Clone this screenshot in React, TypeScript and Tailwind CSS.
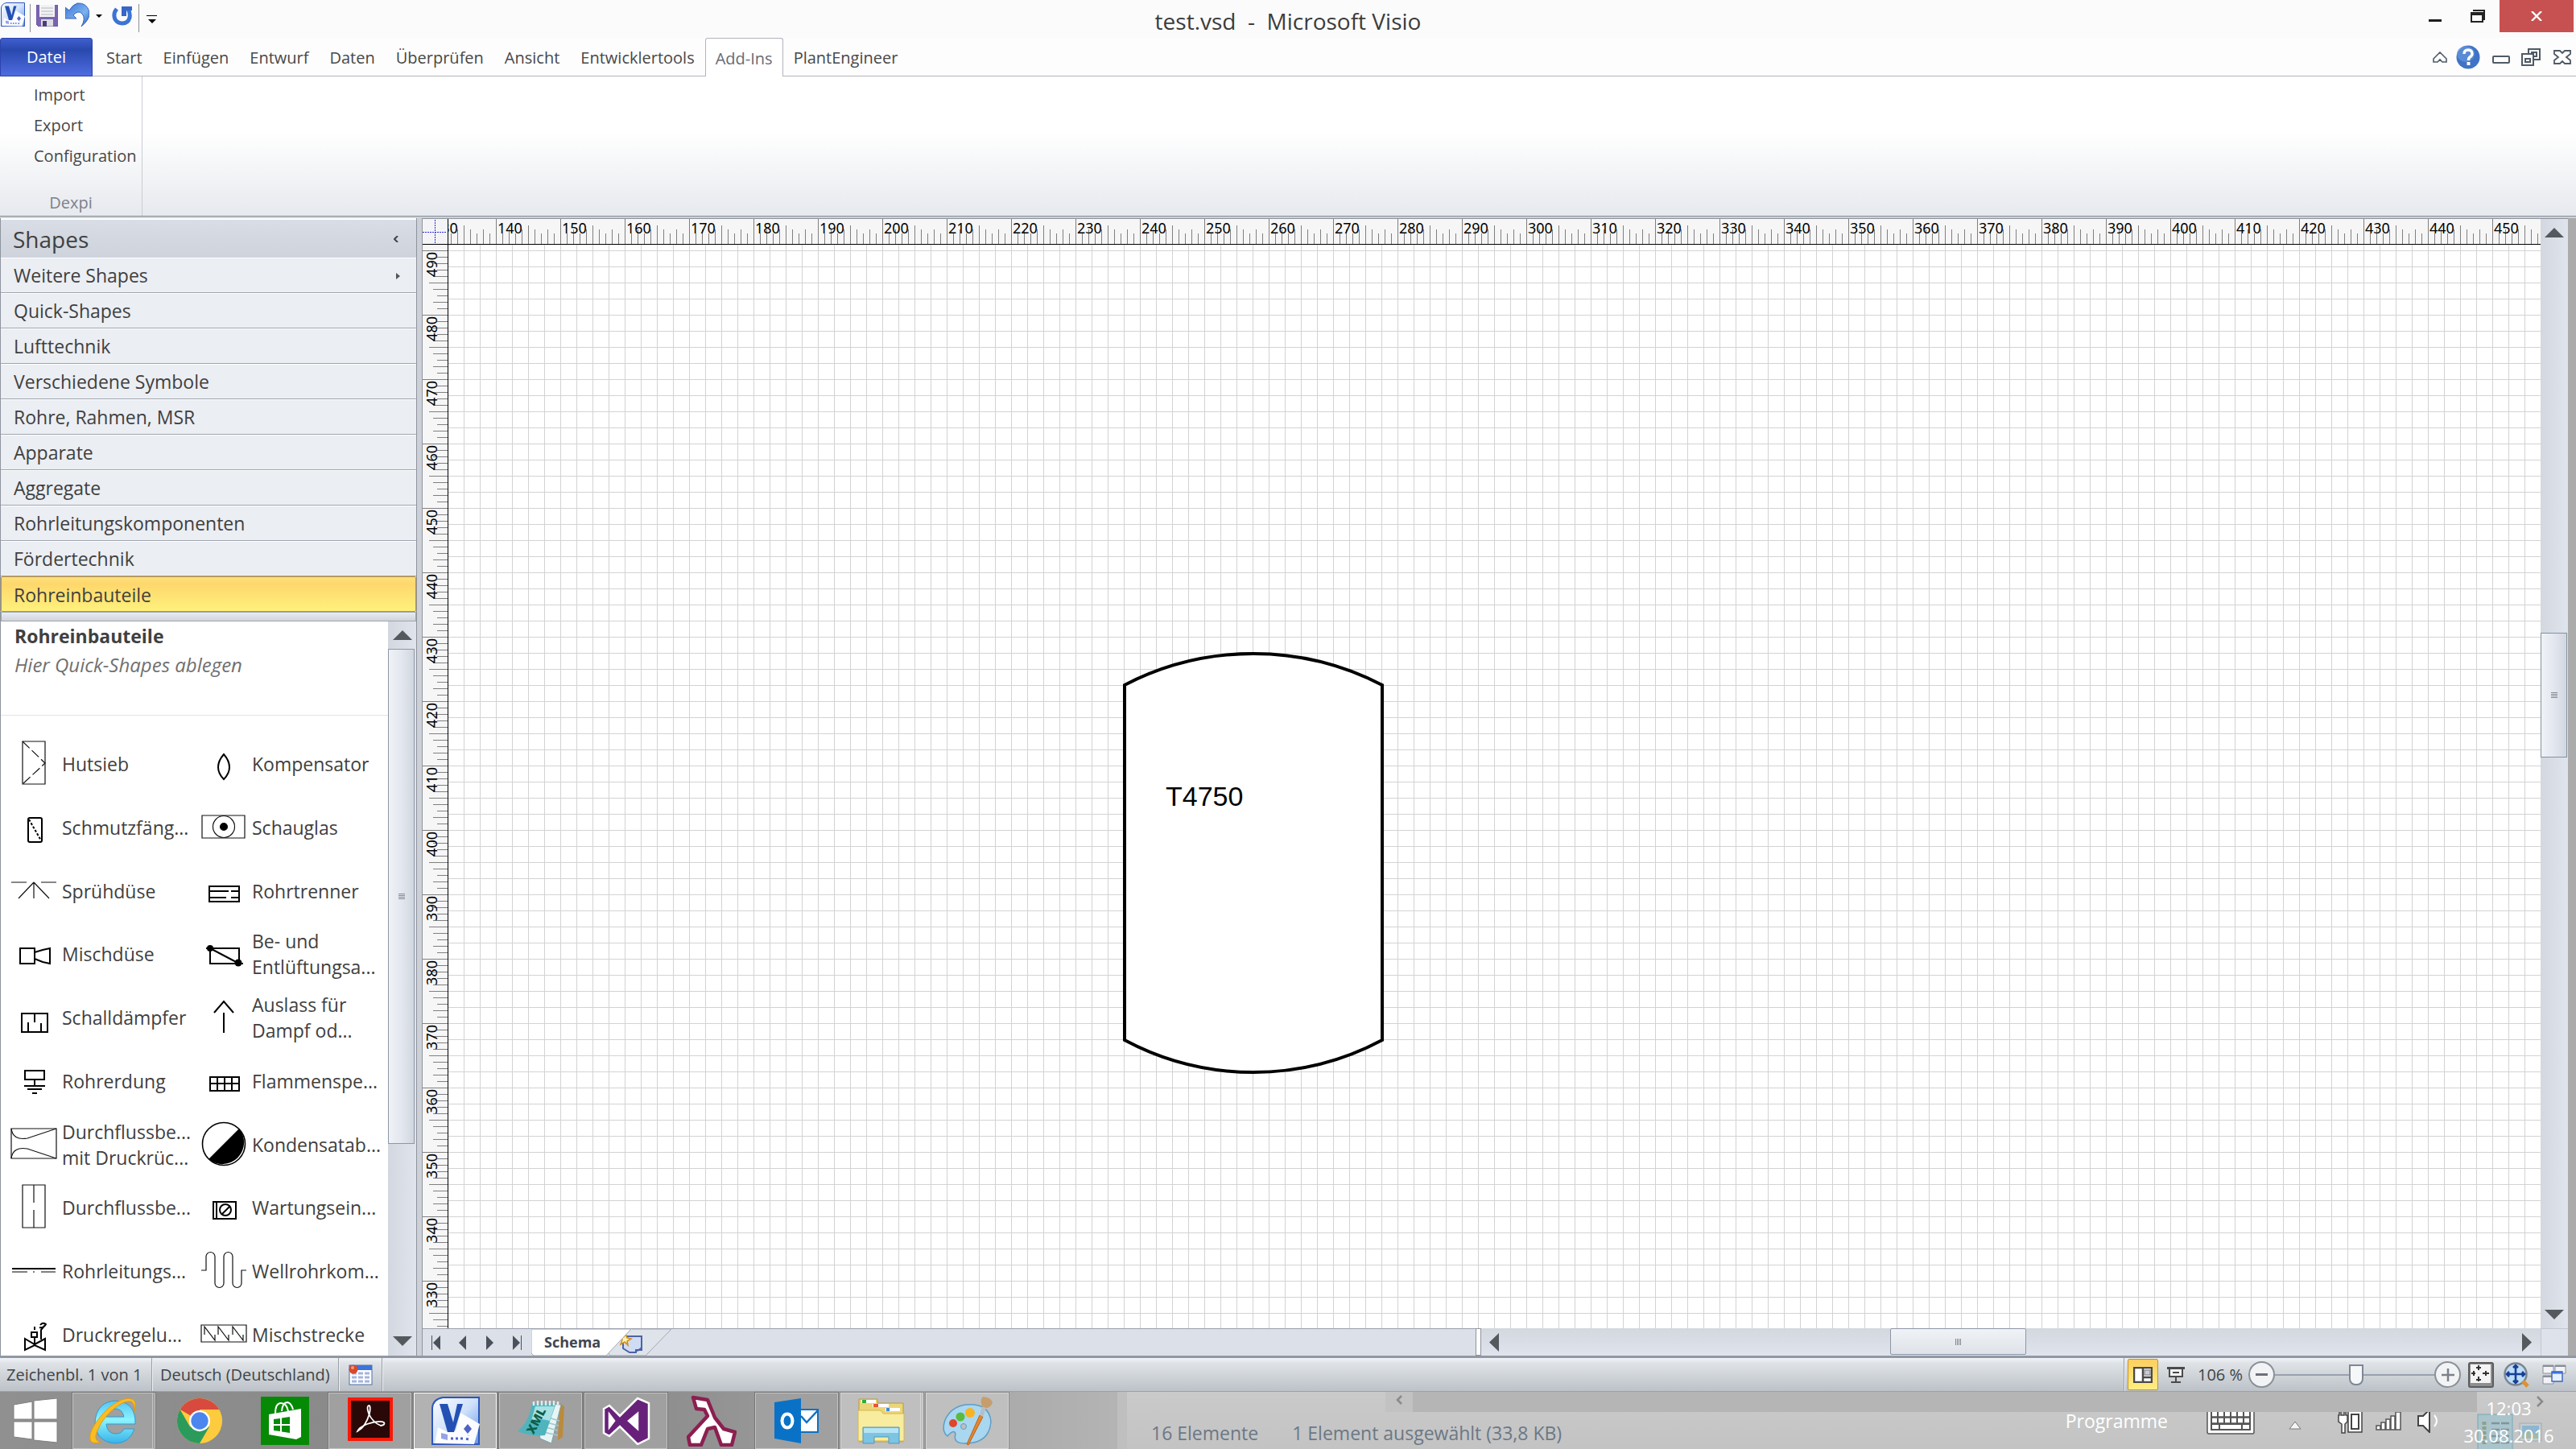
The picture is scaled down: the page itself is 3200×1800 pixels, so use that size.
import React from "react";

type Kids = { children?: React.ReactNode };

/* ---------- shared drawings ---------- */

function VisioLogo({ className }: { className: string }) {
  return (
    <svg viewBox="0 0 60 60" className={className} aria-hidden="true">
      <defs>
        <linearGradient id="visioBack" x1="0" y1="0" x2="1" y2="1">
          <stop offset="0" stopColor="#fdfeff" />
          <stop offset="0.5" stopColor="#cfe0fa" />
          <stop offset="1" stopColor="#5f93e6" />
        </linearGradient>
      </defs>
      <path d="M14 1H59V59H1V14Q2 3 14 1Z" fill="url(#visioBack)" stroke="#2c56bd" strokeWidth="2" />
      <path d="M36 20L60 34L53 59L4 58L8 38L20 44L30 42Z" fill="#ffffff" opacity="0.95" />
      <path d="M10 9H20L27 32L32 9H39L28 44H20Z" fill="#2450b4" />
      <path d="M45 34L50 40L45 46L40 40Z" fill="#4f62c4" />
      <path d="M12 45L20 47V54L12 52Z" fill="#98a2e6" />
      <path d="M24 52H40M44 54L46 48" stroke="#5160c8" strokeWidth="3" strokeDasharray="3 3" />
    </svg>
  );
}

function Triangle({ dir, className, fill = "#55595e" }: { dir: "up" | "down" | "left" | "right"; className: string; fill?: string }) {
  const d = {
    up: "M0 10L10 0L20 10Z",
    down: "M0 0H20L10 10Z",
    left: "M20 0V10L0 5Z",
    right: "M0 0V10L20 5Z",
  }[dir];
  return (
    <svg viewBox="0 0 20 10" preserveAspectRatio="none" className={className} aria-hidden="true">
      <path d={d} fill={fill} />
    </svg>
  );
}

/* ---------- title bar ---------- */

function TitleBar() {
  return (
    <header className="grid h-[47px] shrink-0 grid-cols-[1fr_auto_1fr] bg-[#fbfbfb]">
      <div className="flex items-start">
        <button aria-label="Visio" className="mt-[3px] ml-px"><VisioLogo className="size-[30px]" /></button>
        <span className="mt-[5px] ml-[6px] h-[35px] w-px bg-[#8b8f95]" />
        <button aria-label="Speichern" className="mt-[6px] ml-[7px]">
          <svg viewBox="0 0 27 27" className="size-[27px]">
            <path d="M0 0H27V27H3L0 24Z" fill="#7a63b0" />
            <rect x="4" y="0" width="19" height="15" fill="#f2f2f4" />
            <path d="M6 4H21M6 8H21M6 12H21" stroke="#c9cbd0" strokeWidth="1.5" />
            <rect x="6" y="18" width="15" height="9" fill="#dcdce2" />
            <rect x="8" y="20" width="5" height="7" fill="#4a3c78" />
            <path d="M0 0V24L3 27H27V0" fill="none" stroke="#6a549f" />
          </svg>
        </button>
        <button aria-label="Rückgängig" className="mt-[3px] ml-[9px]">
          <svg viewBox="0 0 30 30" className="size-[30px]">
            <defs>
              <linearGradient id="undo" x1="0" y1="0" x2="1" y2="1">
                <stop offset="0" stopColor="#3d74cf" />
                <stop offset="0.6" stopColor="#7db2f2" />
                <stop offset="1" stopColor="#2a5bb8" />
              </linearGradient>
            </defs>
            <path d="M0 6V20H14L10 16Q16 9 21 14Q26 20 20 30Q31 21 30 12Q27 0 15 1Q9 3 5 10Z" fill="url(#undo)" stroke="#3465bd" />
          </svg>
        </button>
        <button aria-label="Rückgängig-Liste" className="mt-[18px] ml-[8px]"><Triangle dir="down" className="h-[4px] w-[8px]" fill="#000" /></button>
        <button aria-label="Wiederholen" className="mt-[8px] ml-[12px]">
          <svg viewBox="0 0 26 24" className="h-[24px] w-[26px]">
            <path d="M6 3Q1 9 4 16Q7 21 13 21Q20 21 22 14Q23 8 20 3" fill="none" stroke="#3c74d4" strokeWidth="5" />
            <path d="M12 0H25V5H18V12H12Z" fill="#3667c8" />
          </svg>
        </button>
        <span className="mt-[5px] ml-[7px] h-[35px] w-px bg-[#8b8f95]" />
        <button aria-label="Symbolleiste anpassen" className="mt-[19px] ml-[9px] flex flex-col items-center gap-[4px]">
          <span className="h-px w-[13px] bg-black" />
          <Triangle dir="down" className="h-[5px] w-[10px]" fill="#000" />
        </button>
      </div>
      <h1 className="self-center pt-1 text-[28px] leading-[32px] whitespace-pre text-[#3c3c3c]">test.vsd  -  Microsoft Visio</h1>
      <div className="flex items-start justify-end pr-[3px]">
        <button aria-label="Minimieren" className="mt-[24px] mr-[36px] h-[3px] w-[16px] bg-[#1c1c1c]" />
        <button aria-label="Verkleinern" className="mt-[12px] mr-[18px]">
          <svg viewBox="0 0 18 16" className="h-[16px] w-[18px]">
            <path d="M3 1H17V13" fill="none" stroke="#222" strokeWidth="2" />
            <path d="M1 4H15V15H1ZM1 6H15" fill="none" stroke="#222" strokeWidth="2" />
          </svg>
        </button>
        <button aria-label="Schließen" className="flex h-[40px] w-[92px] items-center justify-center bg-[#c75050]">
          <svg viewBox="0 0 14 12" className="h-[12px] w-[14px]"><path d="M1 0L13 12M13 0L1 12" stroke="#fff" strokeWidth="2.4" /></svg>
        </button>
      </div>
    </header>
  );
}

/* ---------- ribbon ---------- */

function Tab({ children }: Kids) {
  return <button role="tab" className="h-full px-[13px] pt-[2px] text-[#484848]">{children}</button>;
}

function RibbonTabs() {
  return (
    <nav role="tablist" className="flex h-[48px] shrink-0 items-center bg-[#fdfdfd] text-[20px] leading-[28px] shadow-[inset_0_-1px_0_#b3b3bd]">
      <button role="tab" className="mr-[4px] h-full w-[115px] rounded-t-[3px] border border-[#2c44ae] bg-linear-to-b from-[#3f5fcf] via-[#2a49ae] via-30% to-[#4e6ce0] text-white">Datei</button>
      <Tab>Start</Tab>
      <Tab>Einfügen</Tab>
      <Tab>Entwurf</Tab>
      <Tab>Daten</Tab>
      <Tab>Überprüfen</Tab>
      <Tab>Ansicht</Tab>
      <Tab>Entwicklertools</Tab>
      <button role="tab" aria-selected="true" className="h-full rounded-t-[3px] border border-b-0 border-[#b3b3bd] bg-white px-[12px] pt-[2px] text-[#666b78]">Add-Ins</button>
      <Tab>PlantEngineer</Tab>
      <div className="ml-auto flex items-center pr-[6px]">
        <button aria-label="Menüband minimieren">
          <svg viewBox="0 0 18 14" className="h-[14px] w-[18px]"><path d="M9 1L17 9V13H12L9 10L6 13H1V9Z" fill="#fff" stroke="#4f5a66" strokeWidth="1.6" /></svg>
        </button>
        <button aria-label="Hilfe" className="ml-[11px]">
          <svg viewBox="0 0 30 30" className="size-[30px]">
            <circle cx="15" cy="15" r="14.5" fill="#3f73c6" />
            <ellipse cx="12" cy="11" rx="11" ry="10" fill="#6c9be0" opacity="0.6" />
            <path d="M10 11Q10 6 15 6Q20 6 20 11Q20 13 17 15Q15.500 16 15.500 19" fill="none" stroke="#fff" strokeWidth="3.400" />
            <rect x="13.500" y="21" width="4" height="4" fill="#fff" />
          </svg>
        </button>
        <button aria-label="Fenster minimieren" className="mt-[5px] ml-[15px] h-[10px] w-[22px] rounded-[2px] border-2 border-[#4f5a66] bg-white" />
        <button aria-label="Fenster wiederherstellen" className="ml-[14px]">
          <svg viewBox="0 0 24 22" className="h-[22px] w-[24px]" fill="#fff" stroke="#4f5a66" strokeWidth="2">
            <path d="M9 1H23V14H9Z" />
            <path d="M13 5H19V10H13Z" />
            <path d="M1 7H15V21H1Z" />
            <path d="M5 13H11V17H5Z" />
          </svg>
        </button>
        <button aria-label="Fenster schließen" className="ml-[16px]">
          <svg viewBox="0 0 22 18" className="h-[18px] w-[22px]"><path d="M1 1H8L11 4L14 1H21V5L16 9L21 13V17H14L11 14L8 17H1V13L6 9L1 5Z" fill="#fff" stroke="#4f5a66" strokeWidth="1.800" /></svg>
        </button>
      </div>
    </nav>
  );
}

function Ribbon() {
  return (
    <section className="flex h-[173px] shrink-0 bg-linear-to-b from-white from-40% to-[#e6e9ee] text-[20px] leading-[38px] text-[#484848]">
      <div className="flex w-[177px] flex-col border-r border-[#c9ccd2] pt-[4px]">
        <div className="flex flex-col items-start pl-[42px]">
          <button>Import</button>
          <button>Export</button>
          <button>Configuration</button>
        </div>
        <p className="mt-auto pb-[4px] text-center leading-[24px] text-[#7c828c]">Dexpi</p>
      </div>
    </section>
  );
}

/* ---------- shapes panel ---------- */

const stencils = [
  "Weitere Shapes",
  "Quick-Shapes",
  "Lufttechnik",
  "Verschiedene Symbole",
  "Rohre, Rahmen, MSR",
  "Apparate",
  "Aggregate",
  "Rohrleitungskomponenten",
  "Fördertechnik",
];

const thin = { fill: "none", stroke: "#111", strokeWidth: 1.2 };
const bold = { fill: "none", stroke: "#000", strokeWidth: 2 };

const shapes: { label: string[]; icon: React.ReactNode }[] = [
  { label: ["Hutsieb"], icon: <g {...thin}><path d="M15 2H43V55H15Z" /><path d="M15 2L43 29L15 55" strokeDasharray="12 4" /></g> },
  { label: ["Kompensator"], icon: <path {...bold} d="M29 18Q36 26 36 34Q36 42 29 49Q22 42 22 34Q22 26 29 18Z" /> },
  { label: ["Schmutzfäng..."], icon: <g {...bold}><rect x="22" y="18" width="17" height="30" rx="2" /><path d="M23 20L38 46" strokeDasharray="3 2" /></g> },
  { label: ["Schauglas"], icon: <g {...thin}><path d="M2 15H55V43H2Z" /><circle cx="29" cy="29" r="13.500" /><circle cx="29" cy="29" r="4.500" fill="#000" /></g> },
  { label: ["Sprühdüse"], icon: <g {...thin}><path d="M1 19H20M38 19H57M29 19V39M29 19L10 39M29 19L48 39" /></g> },
  { label: ["Rohrtrenner"], icon: <g {...bold}><path d="M11 24H48V43H11ZM11 30H35M38 30H48M11 38H32M38 38H48" /></g> },
  { label: ["Mischdüse"], icon: <g {...bold}><path d="M12 23H30V42H12Z" /><path d="M30 28L40 25L49 23V42L40 40L30 36" /></g> },
  { label: ["Be- und", "Entlüftungsa..."], icon: <g {...bold}><path d="M12 23H48V42H12Z" /><path d="M12 23L48 42" /><circle cx="12" cy="23" r="4" fill="#000" stroke="none" /><circle cx="47" cy="41" r="4.500" fill="#000" stroke="none" /><path d="M7 23H17M42 42H53" /></g> },
  { label: ["Schalldämpfer"], icon: <g {...bold}><path d="M14 25H46V48H14ZM30 25V36M22 36V48M38 37V48" /></g> },
  { label: ["Auslass für", "Dampf od..."], icon: <g {...bold}><path d="M29 24V49M17 24L29 10L41 24" /></g> },
  { label: ["Rohrerdung"], icon: <g {...bold}><path d="M18 17H42V28H18ZM30 28V36M17 36H43M21 40H39M27 45H33" /></g> },
  { label: ["Flammenspe..."], icon: <g {...bold}><path d="M12 25H48V42H12ZM12 33H48M21 25V42M30 25V42M39 25V42" /></g> },
  { label: ["Durchflussbe...", "mit Druckrüc..."], icon: <g {...thin}><path d="M1 10H57V47H1Z" /><path d="M1 10Q3 25 21 22L57 10M1 47Q3 32 21 35L57 47" /></g> },
  { label: ["Kondensatab..."], icon: <g><circle cx="29" cy="29" r="26.500" fill="#fff" stroke="#000" strokeWidth="1.600" /><path d="M48 10A27 27 0 0 1 10 48Z" fill="#000" /></g> },
  { label: ["Durchflussbe..."], icon: <g {...thin}><path d="M15 2H43V55H15ZM29 2V24M29 33V55" /></g> },
  { label: ["Wartungsein..."], icon: <g {...bold}><path d="M16 23H44V44H16ZM20 23V44" /><circle cx="31" cy="33" r="7" /><path d="M27 38L37 28" /></g> },
  { label: ["Rohrleitungs..."], icon: <g {...bold}><path d="M2 27H56" /><path d="M2 31H21M28 31H30M38 31H56" strokeWidth="1" /></g> },
  { label: ["Wellrohrkom..."], icon: <g {...thin}><path d="M1 29H7V12A5.500 5.500 0 0 1 18 12V45A5.500 5.500 0 0 0 29 45V12A5.500 5.500 0 0 1 40 12V45A5.500 5.500 0 0 0 51 45V29H57" /></g> },
  { label: ["Druckregelu..."], icon: <g {...bold}><path d="M18 35L30 42L43 35V49L30 43L18 49Z" /><path d="M30 42V32M26 27H33V33H26ZM38 36V24L43 18M37 18Q40 14 44 17Q41 22 36 21M30 24V20" /></g> },
  { label: ["Mischstrecke"], icon: <g {...thin}><path d="M1 18H57V39H1Z" /><path d="M5 30V20L18 37V30M22 30V20L35 37V30M40 30V20L53 37V30" /></g> },
];

function ShapesPanel() {
  return (
    <aside className="flex w-[518px] shrink-0 flex-col overflow-hidden border-x border-[#8e949e] bg-white text-[23px] text-[#404040]">
      <div className="mt-[2px] flex h-[47px] shrink-0 items-center justify-between bg-linear-to-b from-[#d9dde5] to-[#ced3dc] pr-[22px] pl-[15px] text-[28px]">
        <h2>Shapes</h2>
        <button aria-label="Minimieren">
          <svg viewBox="0 0 6 8" className="h-[8px] w-[6px]"><path d="M5 0L1 4L5 8" fill="none" stroke="#444" strokeWidth="2" /></svg>
        </button>
      </div>
      <ul className="shrink-0 bg-[#ebeef3]">
        {stencils.map((name, i) => (
          <li key={name}>
            <button className="flex h-[44px] w-full items-center justify-between border-b border-[#a0a5ad] pt-[2px] pr-[20px] pl-[16px] shadow-[inset_0_1px_0_#ffffff]">
              {name}
              {i === 0 && <Triangle dir="right" className="h-[8px] w-[5px]" fill="#555" />}
            </button>
          </li>
        ))}
        <li>
          <button className="flex h-[44px] w-full items-center rounded-[2px] border border-[#c2932f] bg-linear-to-b from-[#ffe07c] from-0% via-[#fed76c] via-20% to-[#fff17c] pt-[2px] pl-[15px]">Rohreinbauteile</button>
        </li>
      </ul>
      <div className="h-[12px] shrink-0 border border-[#a0a5ad] bg-linear-to-b from-[#e9ecf1] to-[#cfd4dc]" />
      <div className="flex min-h-0 flex-1">
        <div className="flex min-w-0 flex-1 flex-col overflow-hidden">
          <div className="h-[117px] shrink-0 border-b border-[#e2e3e8] pl-[17px] leading-[36px]">
            <h3 className="font-bold">Rohreinbauteile</h3>
            <p className="text-[24px] text-[#707070] italic">Hier Quick-Shapes ablegen</p>
          </div>
          <div className="mt-[21px] grid h-[787px] shrink-0 grid-cols-[236px_236px] grid-rows-10 pl-[3px]">
            {shapes.map((s, i) => (
              <button key={i} className="flex items-center gap-[6px] pl-[9px] text-left leading-[32px] whitespace-nowrap">
                <svg viewBox="0 0 58 60" className="h-[60px] w-[58px] shrink-0" aria-hidden="true">{s.icon}</svg>
                <span>{s.label.map((l) => <span key={l} className="block">{l}</span>)}</span>
              </button>
            ))}
          </div>
        </div>
        <div className="flex w-[35px] shrink-0 flex-col bg-linear-to-r from-[#d3d8e0] to-[#dfe4ed]">
          <button aria-label="Nach oben" className="flex h-[34px] items-center justify-center"><Triangle dir="up" className="h-[12px] w-[24px]" /></button>
          <div className="flex h-[615px] w-[33px] items-center justify-center border border-[#8e97a5] bg-linear-to-r from-[#eff2f6] via-[#e3e7ef] to-[#d2d6de]"><Grip /></div>
          <button aria-label="Nach unten" className="mt-auto flex h-[36px] items-center justify-center"><Triangle dir="down" className="h-[12px] w-[24px]" /></button>
        </div>
      </div>
    </aside>
  );
}

function Grip({ turned = false }: { turned?: boolean }) {
  return (
    <span className={turned ? "flex gap-px" : "flex flex-col gap-px"}>
      {[0, 1, 2, 3].map((n) => (
        <i key={n} className={turned ? "h-[8px] w-px bg-[#85898f]" : "h-px w-[8px] bg-[#85898f]"} />
      ))}
    </span>
  );
}

/* ---------- rulers and page ---------- */

const tickLengths = [32, 14, 19, 14, 19, 24, 19, 14, 19, 14];
const columns = Array.from({ length: 33 }, (_, i) => 130 + i * 10);
const rows = Array.from({ length: 17 }, (_, i) => 490 - i * 10);

function TopRuler() {
  const ticks = tickLengths.map((l, i) => `M${i * 8 + 0.5} ${32 - l}V32`).join("");
  return (
    <div className="flex h-[32px] overflow-hidden border-b border-black bg-[#f6f6f6]">
      <div className="-ml-[21px] flex">
        {columns.map((n) => (
          <div key={n} className="relative h-[31px] w-[80px] shrink-0 pl-[2px] text-[18px] leading-[22px]">
            <svg viewBox="0 0 80 32" className="absolute top-0 left-0 h-[32px] w-[80px]"><path d={ticks} stroke="#808080" /></svg>
            <span className="relative">{n}</span>
          </div>
        ))}
      </div>
    </div>
  );
}

function SideRuler() {
  const ticks = tickLengths.map((l, i) => `M${32 - l} ${i * 8 + 0.5}H32`).join("");
  return (
    <div className="flex h-full flex-col overflow-hidden border-r border-black bg-[#f6f6f6] pt-[7px]">
      {rows.map((n) => (
        <div key={n} className="relative h-[80px] w-[32px] shrink-0 pt-[2px] text-[18px] leading-[22px]">
          <svg viewBox="0 0 32 80" className="absolute top-0 left-0 h-[80px] w-[32px]"><path d={ticks} stroke="#808080" /></svg>
          <span className="relative block w-[22px] rotate-180 [writing-mode:vertical-rl]">{n}</span>
        </div>
      ))}
    </div>
  );
}

function Page() {
  return (
    <div className="relative overflow-hidden bg-white bg-[linear-gradient(to_right,#d3d3d3_1px,transparent_1px),linear-gradient(to_bottom,#d3d3d3_1px,transparent_1px)] bg-[length:20px_20px] bg-[position:19px_7px]">
      <svg viewBox="0 0 324 524" className="absolute top-[506px] left-[838px] h-[524px] w-[324px]">
        <path d="M2 41Q77 2 162 2Q247 2 322 41V482Q247 522 162 522Q77 522 2 482Z" fill="#fff" stroke="#000" strokeWidth="4" />
      </svg>
      <span className="absolute top-[665px] left-[891px] font-['Liberation_Sans',sans-serif] text-[34px] leading-[40px] text-black">T4750</span>
    </div>
  );
}

function PageTabs() {
  return (
    <div className="flex h-[34px] shrink-0 bg-[#dce0e8]">
      <div className="flex w-[1308px] items-center border-t border-[#9aa0ae] pl-[11px]">
        <button aria-label="Erste Seite" className="flex h-[18px] w-[11px] justify-between"><i className="w-px bg-[#4b515c]" /><Triangle dir="left" className="h-[18px] w-[9px]" fill="#4b515c" /></button>
        <button aria-label="Vorherige Seite" className="ml-[23px]"><Triangle dir="left" className="h-[18px] w-[9px]" fill="#4b515c" /></button>
        <button aria-label="Nächste Seite" className="ml-[25px]"><Triangle dir="right" className="h-[18px] w-[9px]" fill="#4b515c" /></button>
        <button aria-label="Letzte Seite" className="ml-[24px] flex h-[18px] w-[11px] justify-between"><Triangle dir="right" className="h-[18px] w-[9px]" fill="#4b515c" /><i className="w-px bg-[#4b515c]" /></button>
        <button className="relative ml-[12px] h-full w-[126px] pl-[16px] text-left">
          <svg viewBox="0 0 126 33" className="absolute top-0 left-0 h-full w-full"><path d="M0 0H124L93 33H3L0 30Z" fill="#fff" stroke="#a3a8b2" strokeWidth="1" /></svg>
          <span className="relative text-[18px] font-bold text-[#40464f]">Schema</span>
        </button>
        <button aria-label="Neue Seite" className="-ml-[32px] h-full">
          <svg viewBox="0 0 82 33" className="h-[33px] w-[82px]">
            <path d="M31 0H80L48 33H4L0 28" fill="#dfe3ea" stroke="#a3a8b2" />
            <path d="M20 9H43V26H36V29H28L20 24Z" fill="#cfdcf3" stroke="#4b64a6" strokeWidth="2" />
            <path d="M34 29L43 22V26Z" fill="#4b64a6" />
            <path d="M23 6L25 11L30 12L25 15L26 20L22 16L17 19L19 13L16 9L21 10Z" fill="#fff3b0" stroke="#d18a1c" strokeWidth="1.500" />
          </svg>
        </button>
      </div>
      <span className="w-[7px] border border-[#8e949e] bg-white" />
      <div className="flex min-w-0 flex-1 items-center bg-linear-to-b from-[#d3d8df] to-[#dfe4ed] pr-[11px] pl-[10px]">
        <button aria-label="Nach links"><Triangle dir="left" className="h-[23px] w-[12px]" /></button>
        <div className="ml-[486px] flex h-[33px] w-[169px] items-center justify-center self-start rounded-[2px] border border-[#8e97a5] bg-linear-to-b from-[#eff2f6] to-[#dfe2e8]"><Grip turned /></div>
        <button aria-label="Nach rechts" className="ml-auto"><Triangle dir="right" className="h-[23px] w-[12px]" /></button>
      </div>
      <span className="w-[34px] border-t border-l border-[#c3c8d0] bg-[#dee2ea]" />
    </div>
  );
}

function DrawingArea() {
  return (
    <main className="flex min-w-0 flex-1 flex-col border-l border-[#8e949e]">
      <div className="flex min-h-0 flex-1 border-t border-[#8e949e]">
        <div className="grid min-w-0 flex-1 grid-cols-[32px_minmax(0,1fr)] grid-rows-[32px_minmax(0,1fr)] font-['Noto_Sans',sans-serif] text-black">
          <div className="flex items-center border-r border-b border-black bg-[#f4f4f6]">
            <svg viewBox="0 0 31 30" className="h-[30px] w-[31px]"><path d="M0 15.500H30M15.500 0V30" stroke="#2a2ae0" strokeDasharray="2 1" /></svg>
          </div>
          <TopRuler />
          <SideRuler />
          <Page />
        </div>
        <div className="flex w-[34px] shrink-0 flex-col bg-linear-to-r from-[#d3d8e0] to-[#dfe4ed]">
          <button aria-label="Nach oben" className="flex h-[34px] items-center justify-center"><Triangle dir="up" className="h-[12px] w-[24px]" /></button>
          <div className="mt-[480px] flex h-[155px] w-[33px] items-center justify-center border border-[#8292a2] bg-linear-to-r from-[#eff2f6] via-[#e3e7ef] to-[#d2d6de]"><Grip /></div>
          <button aria-label="Nach unten" className="mt-auto flex h-[34px] items-center justify-center"><Triangle dir="down" className="h-[12px] w-[24px]" /></button>
        </div>
      </div>
      <PageTabs />
    </main>
  );
}

/* ---------- status bar ---------- */

const divider = "h-full w-[2px] border-r border-[#eef0f3] bg-[#9aa0a8]";

function StatusBar() {
  return (
    <footer className="flex h-[44px] shrink-0 items-center border-t-[3px] border-[#9198a5] bg-linear-to-b from-[#f2f4f6] via-[#dfe3e7] via-15% to-[#bcc2c8] text-[20px] leading-[28px] text-[#404448]">
      <span className="w-[188px] pl-[8px]">Zeichenbl. 1 von 1</span>
      <i className={divider} />
      <button className="w-[230px] pl-[9px] text-left">Deutsch (Deutschland)</button>
      <i className={divider} />
      <button aria-label="Makro aufzeichnen" className="flex w-[52px] justify-center">
        <svg viewBox="0 0 30 26" className="h-[26px] w-[30px]">
          <rect x="1" y="1" width="28" height="24" fill="#fff" stroke="#4a6fa8" />
          <rect x="1" y="1" width="28" height="6" fill="#3a74dc" />
          <path d="M4 11H26M4 16H26M4 21H26" stroke="#a4b4dc" strokeWidth="3" strokeDasharray="6 2" />
          <circle cx="6" cy="6" r="5.500" fill="#d9482c" />
          <circle cx="5" cy="4" r="2" fill="#f19a80" />
        </svg>
      </button>
      <i className={divider} />
      <div className="ml-auto flex h-full items-center pr-[12px]">
        <i className={divider} />
        <button aria-label="Normalansicht" className="ml-[3px] flex h-[39px] w-[38px] items-center justify-center rounded-[2px] border border-[#c2932f] bg-linear-to-b from-[#fdcf60] to-[#ffee80]">
          <svg viewBox="0 0 24 20" className="h-[20px] w-[24px]"><path d="M1 1H23V19H1ZM12 1V19M12 13H23" fill="#fff" stroke="#4a4a4a" strokeWidth="2.500" /><rect x="14" y="4" width="7" height="6" fill="#c9ccd6" stroke="#777" /></svg>
        </button>
        <button aria-label="Vollbildansicht" className="ml-[11px]">
          <svg viewBox="0 0 22 20" className="h-[20px] w-[22px]"><path d="M0 0H22V3H0Z" fill="#4a4a4a" /><path d="M3 3V12H19V3" fill="#f4f4f4" stroke="#4a4a4a" strokeWidth="2" /><path d="M7 7H15M11 12V18M5 19H17" stroke="#4a4a4a" strokeWidth="2" /></svg>
        </button>
        <span className="ml-[16px] w-[62px] whitespace-nowrap">106 %</span>
        <button aria-label="Verkleinern" className="ml-px flex size-[33px] items-center justify-center rounded-full border-2 border-[#8b9098] bg-[#f2f3f5]"><i className="h-[3px] w-[15px] bg-[#6c7178]" /></button>
        <input
          type="range"
          aria-label="Zoom"
          defaultValue={51}
          className="h-[26px] w-[198px] appearance-none bg-[linear-gradient(#98a1ad,#98a1ad)] bg-[length:100%_2px] bg-center bg-no-repeat [&::-webkit-slider-thumb]:h-[26px] [&::-webkit-slider-thumb]:w-[18px] [&::-webkit-slider-thumb]:appearance-none [&::-webkit-slider-thumb]:rounded-b-[8px] [&::-webkit-slider-thumb]:border-2 [&::-webkit-slider-thumb]:border-[#7d8894] [&::-webkit-slider-thumb]:bg-[#f6f7f9]"
        />
        <button aria-label="Vergrößern" className="flex size-[33px] items-center justify-center rounded-full border-2 border-[#8b9098] bg-[#f2f3f5]">
          <svg viewBox="0 0 16 16" className="size-[16px]"><path d="M0 8H16M8 0V16" stroke="#7c8088" strokeWidth="2.500" /></svg>
        </button>
        <button aria-label="An Fenster anpassen" className="ml-[9px]">
          <svg viewBox="0 0 32 32" className="size-[32px]">
            <rect x="1" y="1" width="30" height="30" rx="2" fill="#8e8e8e" stroke="#5c5c5c" strokeWidth="2" />
            <path d="M3 3H28V26H3Z" fill="#f4f4f4" />
            <path d="M13 4V10M10 7H16M13 18V24M10 22H16M4 14H9M7 11V17M18 14H26M22 11V17" stroke="#333" strokeWidth="2" />
          </svg>
        </button>
        <button aria-label="Verschieben und Zoomen" className="ml-[12px]">
          <svg viewBox="0 0 32 32" className="size-[32px]">
            <circle cx="15" cy="15" r="13.500" fill="#bcdcf8" stroke="#7d858f" strokeWidth="2.500" />
            <path d="M15 4V26M4 15H26M12 7L15 4L18 7M12 23L15 26L18 23M7 12L4 15L7 18M23 12L26 15L23 18" fill="none" stroke="#173f95" strokeWidth="2.600" />
            <path d="M24 24L30 30" stroke="#e0912c" strokeWidth="5" />
          </svg>
        </button>
        <button aria-label="Fenster wechseln" className="ml-[16px]">
          <svg viewBox="0 0 30 26" className="h-[26px] w-[30px]" fill="#f2f3f6" stroke="#8a8e99">
            <path d="M1 1H14V11H1ZM16 1H29V11H16ZM1 14H14V24H1Z" />
            <path d="M1 2H14M16 2H29M1 15H14" strokeWidth="2" />
            <path d="M12 9H25V21H12Z" fill="#e6effc" stroke="#3f68b8" strokeWidth="1.500" />
            <path d="M12 10H25" stroke="#3b6fe0" strokeWidth="3" />
          </svg>
        </button>
      </div>
    </footer>
  );
}

/* ---------- task bar ---------- */

const taskIcon = "h-[60px] w-[62px]";
const plainSlot = "flex h-[70px] w-[103px] items-center justify-center";
const openSlot = "flex h-[70px] w-[103px] items-center justify-center border border-[#c4c4c4] bg-[#a0a0a0] outline outline-[#777]";
const activeSlot = "flex h-[70px] w-[103px] items-center justify-center border border-white bg-[#b2b2b2] outline outline-[#777]";
const lightSlot = "flex h-[70px] w-[103px] items-center justify-center border border-[#d6d6d6] bg-[#bfbfbf] outline outline-[#8c8c8c]";

function TaskIcons() {
  return (
    <div className="flex items-center gap-[3px]">
      <button aria-label="Start" className="flex w-[87px] justify-center">
        <svg viewBox="0 0 56 56" className="size-[56px]" fill="#fff" stroke="#808080"><path d="M1 8L24 4V26H1ZM26 3L55 0V26H26ZM1 29H24V51L1 48ZM26 29H55V55L26 52Z" /></svg>
      </button>
      <button aria-label="Internet Explorer" className={openSlot + " border-r-4 border-double"}>
        <svg viewBox="0 0 62 60" className={taskIcon}>
          <defs><linearGradient id="ie" x1="0" y1="0" x2="0" y2="1"><stop offset="0" stopColor="#58c4f0" /><stop offset="0.450" stopColor="#8af4ff" /><stop offset="1" stopColor="#39b2e8" /></linearGradient></defs>
          <path d="M59 34H23Q24 46 35 46Q42 46 45 40H58Q52 58 34 58Q10 56 9 32Q11 6 35 5Q60 7 59 34ZM23 25H45Q43 15 34 15Q25 16 23 25Z" fill="url(#ie)" stroke="#2f9bd2" />
          <path d="M57 20Q64 2 50 2Q34 4 18 22Q0 43 3 54Q5 60 17 56Q9 56 10 48Q14 33 28 19Q44 4 54 6Q59 9 57 20Z" fill="#f9bd22" stroke="#de930c" strokeWidth="0.800" />
        </svg>
      </button>
      <button aria-label="Chrome" className={plainSlot}>
        <svg viewBox="0 0 62 62" className="size-[60px]">
          <circle cx="31" cy="31" r="29" fill="#fdcb3e" />
          <path d="M31 31L5.900 16.500A29 29 0 0 1 56.100 16.500H31Z" fill="#d94a3e" />
          <path d="M5.900 16.500A29 29 0 0 0 31 60L43.600 38.200L31 45L18.400 38.200Z" fill="#2b9b5b" />
          <circle cx="31" cy="31" r="13.500" fill="#fff" />
          <circle cx="31" cy="31" r="11" fill="#4a86ee" />
        </svg>
      </button>
      <button aria-label="Store" className={plainSlot}>
        <svg viewBox="0 0 60 60" className="size-[60px]">
          <rect width="60" height="60" fill="#068a06" />
          <path d="M10 22L50 15V50L44 53L10 47Z" fill="#fff" />
          <path d="M18 21Q18 8 25 8Q32 8 34 18M26 18Q27 7 33 7Q38 8 40 16" fill="none" stroke="#fff" strokeWidth="2" />
          <path d="M16 28L24 27V34H16ZM26 26.500L36 25V34H26ZM16 36H24V43L16 42ZM26 36H36V45L26 43.500Z" fill="#068a06" />
        </svg>
      </button>
      <button aria-label="Acrobat Reader" className={openSlot}>
        <svg viewBox="0 0 56 54" className="mb-[4px] h-[54px] w-[56px]">
          <rect width="56" height="54" fill="#f81808" />
          <rect x="4" y="4" width="48" height="46" fill="#2a0808" />
          <path d="M12 42Q22 37 27 20Q29 10 26 10Q23 11 26 20Q31 31 41 35Q47 34 45 31Q40 28 24 33Q14 37 12 42Z" fill="none" stroke="#fff" strokeWidth="1.800" />
        </svg>
      </button>
      <button aria-label="Visio" className={activeSlot}><VisioLogo className="size-[60px]" /></button>
      <button aria-label="XML Notepad" className={openSlot}>
        <svg viewBox="0 0 62 60" className={taskIcon}>
          <path d="M54 8L60 12L58 50L52 54Z" fill="#b98b3c" />
          <path d="M22 8L56 10L44 58L30 52Z" fill="#e8f4f6" stroke="#7ba0a6" />
          <path d="M34 44L52 48M37 38L52 42M38 32L53 36M40 26L54 30" stroke="#9fc6cc" strokeWidth="1.500" />
          <path d="M20 8H50L36 48Q20 50 2 43Q16 32 20 8Z" fill="#4fb4be" />
          <path d="M24 12H48L42 30Q28 26 19 30Z" fill="#a8e2e4" />
          <path d="M22 6V11M27 5V11M32 5V11M37 5V11M42 5V11M47 5V11M52 6V12" stroke="#e8e8e8" strokeWidth="2.500" />
          <text x="16" y="46" transform="rotate(-62 20 42)" fontFamily="Open Sans, sans-serif" fontSize="15" fontWeight="800" fill="#0e5f4a">XML</text>
        </svg>
      </button>
      <button aria-label="Visual Studio" className={openSlot}>
        <svg viewBox="0 0 62 60" className={taskIcon}><path d="M3 15L10 11L23 24L45 2L59 8V52L45 59L23 37L10 49L3 45ZM10 22V38L16 30ZM45 21L34 30L45 40Z" fill="#68217a" fillRule="evenodd" stroke="#fff" strokeWidth="2.500" /><path d="M10.500 23V37L16 30ZM44 21L33 30L44 40Z" fill="#fff" /></svg>
      </button>
      <button aria-label="Lambda" className={plainSlot}>
        <svg viewBox="0 0 62 64" className="h-[64px] w-[62px]"><path d="M8 3L26 6L35 28L46 42L60 46L56 62H43L35 40L26 42L18 62H4L2 52L26 26L22 18L12 17Z" fill="#fff" stroke="#8c1f50" strokeWidth="4.500" strokeLinejoin="round" /></svg>
      </button>
      <button aria-label="Outlook" className={openSlot}>
        <svg viewBox="0 0 56 56" className="size-[56px]">
          <path d="M0 5L33 0V56L0 50Z" fill="#0a72c6" />
          <ellipse cx="16" cy="28" rx="6.500" ry="8.500" fill="none" stroke="#fff" strokeWidth="4" />
          <path d="M33 14H54V42H33" fill="#fff" stroke="#0a72c6" strokeWidth="2" />
          <path d="M33 22L40 30L54 15" fill="none" stroke="#0a72c6" strokeWidth="2.500" />
        </svg>
      </button>
      <button aria-label="Explorer" className={lightSlot + " border-r-4 border-double"}>
        <svg viewBox="0 0 60 60" className="size-[60px]">
          <path d="M3 3H26V8H58V56H3Z" fill="#ecd577" stroke="#b99a3e" />
          <rect x="6" y="4" width="18" height="4" fill="#fff" /><rect x="7" y="4" width="5" height="4" fill="#2eaf2a" />
          <rect x="20" y="9" width="20" height="4" fill="#fff" /><rect x="21" y="9" width="6" height="4" fill="#e8562a" />
          <rect x="36" y="14" width="18" height="4" fill="#fff" /><rect x="37" y="14" width="4" height="4" fill="#3a8ad8" />
          <path d="M2 17H30L33 21H59V55H2Z" fill="#f8ec9e" stroke="#d4b650" />
          <path d="M8 38H53V58H40V50H22V58H8Z" fill="#7cc4e2" stroke="#4f97bd" />
          <path d="M9 39H52V45H9Z" fill="#b5e4f4" />
        </svg>
      </button>
      <button aria-label="Paint" className={lightSlot}>
        <svg viewBox="0 0 62 62" className="size-[62px]">
          <path d="M28 11Q58 8 60 32Q58 58 30 59Q12 60 16 47Q14 41 6 50Q-2 44 3 30Q10 14 28 11Z" fill="#a9d7f0" stroke="#5f9cc4" strokeWidth="1.500" />
          <circle cx="26" cy="38" r="3.500" fill="#bfbfbf" stroke="#5f9cc4" />
          <circle cx="13" cy="34" r="5" fill="#e0452c" /><circle cx="22" cy="26" r="5.500" fill="#5abb3e" /><circle cx="34" cy="21" r="6" fill="#f7b321" />
          <path d="M46 24L50 26L32 61L30 60Z" fill="#e8862c" stroke="#b8601a" />
          <path d="M49 13L54 15L50 26L46 24Z" fill="#b9bdc2" />
          <path d="M49 13Q46 4 50 1Q60 2 62 8Q60 15 54 15Z" fill="#c69d6c" />
        </svg>
      </button>
    </div>
  );
}

function Tray() {
  return (
    <div className="flex items-center text-[22px] text-white">
      <span className="pt-[2px] text-[23px]">Programme</span>
      <button aria-label="Mehr Programme" className="mb-[48px] ml-[12px]">
        <svg viewBox="0 0 16 12" className="h-[12px] w-[16px]"><path d="M1 1L6 6L1 11M9 1L14 6L9 11" fill="none" stroke="#fff" strokeWidth="2.500" /></svg>
      </button>
      <button aria-label="Bildschirmtastatur" className="mb-[2px] ml-[20px]">
        <svg viewBox="0 0 60 36" className="h-[36px] w-[60px]">
          <rect x="1" y="1" width="58" height="34" rx="2" fill="#fff" stroke="#555" strokeWidth="1.500" />
          <rect x="5" y="5" width="50" height="26" fill="#555" />
          <path d="M7 10.500H53M7 18.500H53" stroke="#fff" strokeWidth="5.500" strokeDasharray="6 2" />
          <path d="M7 26.500H15M17 26.500H43M45 26.500H53" stroke="#fff" strokeWidth="5" />
        </svg>
      </button>
      <button aria-label="Ausgeblendete Symbole" className="mt-[12px] ml-[42px]">
        <svg viewBox="0 0 16 11" className="h-[11px] w-[16px]"><path d="M1 10L8 1L15 10Z" fill="#f4f4f4" stroke="#777" /></svg>
      </button>
      <button aria-label="Akku" className="ml-[45px]">
        <svg viewBox="0 0 31 32" className="h-[32px] w-[31px]" fill="#fff" stroke="#444" strokeWidth="1.500">
          <path d="M2 1H4V9H8V1H10V9H12V17L9 20V31H5V20L1 17V9H2Z" />
          <path d="M15 4H19V1H26V4H30V30H13V4Z" />
          <path d="M17 8H26V26H17Z" strokeWidth="2" />
        </svg>
      </button>
      <button aria-label="Netzwerk" className="ml-[16px]">
        <svg viewBox="0 0 32 24" className="h-[24px] w-[32px]" fill="#fff" stroke="#555" strokeWidth="1.500"><path d="M1 18H6V23H1ZM7 14H12V23H7ZM13 10H18V23H13ZM19 6H24V23H19ZM25 1H31V23H25Z" /></svg>
      </button>
      <button aria-label="Lautstärke" className="ml-[20px]">
        <svg viewBox="0 0 28 30" className="h-[30px] w-[28px]"><path d="M1 9H7L15 1V29L7 21H1Z" fill="#fff" stroke="#444" strokeWidth="2" /><path d="M21 8Q27 15 21 22" fill="none" stroke="#fff" strokeWidth="2" /></svg>
      </button>
      <div className="relative ml-[28px] flex w-[141px] flex-col items-center pt-[2px] leading-[34px]">
        <svg viewBox="0 0 140 72" className="absolute top-0 left-0 h-[72px] w-[140px]">
          <rect x="19" y="27" width="43" height="45" fill="#a9c4cb" stroke="#79a8b8" />
          <path d="M27 36V66" stroke="#8fa08c" strokeWidth="5" strokeDasharray="4 2" />
          <path d="M36 38H58M36 46H58M36 54H58M36 62H58" stroke="#7e959f" strokeWidth="2.500" strokeDasharray="10 2" />
          <rect x="71" y="38" width="27" height="22" fill="#c4ccd0" stroke="#a4a9ad" />
          <path d="M74 41H95V57H74Z" fill="#8db6d0" /><path d="M74 52L82 47L88 52L95 48V57H74Z" fill="#a3b9a6" />
          <path d="M93 5L99 11L93 17" fill="none" stroke="#8a8a8a" strokeWidth="2.500" />
        </svg>
        <time className="relative pr-[26px]">12:03</time>
        <time className="relative pr-[26px]">30.08.2016</time>
      </div>
    </div>
  );
}

function TaskBar() {
  return (
    <div className="flex h-[72px] shrink-0 border-t border-[#a0a0a0] bg-[#c6c6c6]">
      <div className="flex w-[1388px] shrink-0 items-center bg-linear-to-r from-[#909090] via-[#868686] via-50% to-[#b4b4b4]"><TaskIcons /></div>
      <div className="relative flex min-w-0 flex-1 justify-between border-l-[12px] border-[#bfbfbf] bg-linear-to-b from-[#cacaca] to-[#c3c3c3]">
        <div className="absolute top-0 right-[123px] left-[321px] flex h-[25px] bg-[#b5b5b5]">
          <span className="flex w-[34px] items-center justify-center bg-[#c2c2c2]"><svg viewBox="0 0 9 12" className="mb-[6px] h-[12px] w-[9px]"><path d="M7 1L2 6L7 11" fill="none" stroke="#8a8a8a" strokeWidth="2.500" /></svg></span>
        </div>
        <p className="relative flex items-end gap-[42px] pb-[6px] pl-[30px] text-[23px] leading-[28px] text-[#6b7886]">
          <span>16 Elemente</span>
          <span>1 Element ausgewählt (33,8 KB)</span>
        </p>
        <Tray />
      </div>
    </div>
  );
}

export default function App() {
  return (
    <div className="flex h-screen flex-col overflow-hidden bg-[#cdd1d7] font-['Open_Sans','Noto_Sans',sans-serif]">
      <TitleBar />
      <RibbonTabs />
      <Ribbon />
      <div className="flex min-h-0 flex-1 gap-[6px] border-t border-[#8b9098] bg-[#cdd1d7] pt-[2px]">
        <ShapesPanel />
        <div className="flex min-w-0 flex-1 bg-[#ababab] pr-[10px]"><DrawingArea /></div>
      </div>
      <StatusBar />
      <TaskBar />
    </div>
  );
}
